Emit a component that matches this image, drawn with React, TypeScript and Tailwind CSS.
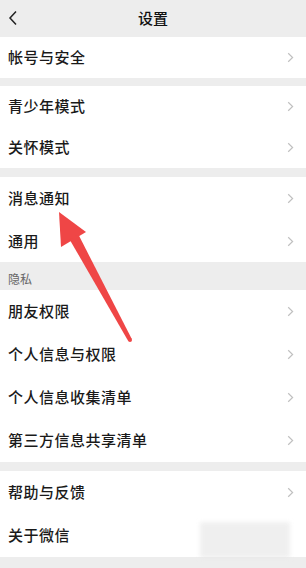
import React from 'react';

const font = { fontFamily: '"Noto Sans CJK SC", "Noto Sans", sans-serif' };

function Chevron() {
  return (
    <svg width="7" height="11" viewBox="0 0 7 11" className="mr-[12px]">
      <path d="M1.2 1.2 L5.6 5.5 L1.2 9.8" fill="none" stroke="#c0c0c0" strokeWidth="1.2" />
    </svg>
  );
}

function Row({ label, h, arrow = true }: { label: string; h: string; arrow?: boolean }) {
  return (
    <div className={`flex items-center justify-between bg-white pl-[8px] ${h}`}>
      <span className="text-[15px] font-medium text-[#1a1a1a] tracking-[0.5px]">{label}</span>
      {arrow && <Chevron />}
    </div>
  );
}

export default function App() {
  return (
    <div className="relative h-[568px] w-[306px] overflow-hidden bg-[#ededed]" style={font}>
      {/* header */}
      <div className="relative flex h-[37px] items-center justify-center bg-[#ededed]">
        <svg width="10" height="16" viewBox="0 0 10 16" className="absolute left-[8px] top-[10px]">
          <path d="M8 1.5 L2 8 L8 14.5" fill="none" stroke="#222" strokeWidth="1.5" />
        </svg>
        <span className="text-[15px] font-medium text-[#111]">设置</span>
      </div>

      <Row label="帐号与安全" h="h-[41px]" />
      <div className="h-[8px]" />
      <Row label="青少年模式" h="h-[41px]" />
      <Row label="关怀模式" h="h-[41px]" />
      <div className="h-[9px]" />
      <Row label="消息通知" h="h-[43px]" />
      <Row label="通用" h="h-[42px]" />
      <div className="flex h-[28px] items-end pb-[2px] pl-[8px] text-[12px] text-[#666]">隐私</div>
      <Row label="朋友权限" h="h-[43px]" />
      <Row label="个人信息与权限" h="h-[43px]" />
      <Row label="个人信息收集清单" h="h-[43px]" />
      <Row label="第三方信息共享清单" h="h-[43px]" />
      <div className="h-[9px]" />
      <Row label="帮助与反馈" h="h-[43px]" />
      <Row label="关于微信" h="h-[43px]" arrow={false} />

      {/* faint watermark */}
      <div className="absolute left-[200px] top-[522px] h-[36px] w-[90px] bg-[#e6e6e6] opacity-60 blur-[2px]" />

      {/* red annotation arrow */}
      <svg width="306" height="568" viewBox="0 0 306 568" className="pointer-events-none absolute left-0 top-0">
        <polygon points="59,212 61,247 86,232" fill="#ef4646" />
        <polygon points="78.4,234.6 69.6,239.4 128.2,341 131.8,339" fill="#ef4646" />
        <circle cx="130" cy="340" r="2" fill="#ef4646" />
      </svg>
    </div>
  );
}
